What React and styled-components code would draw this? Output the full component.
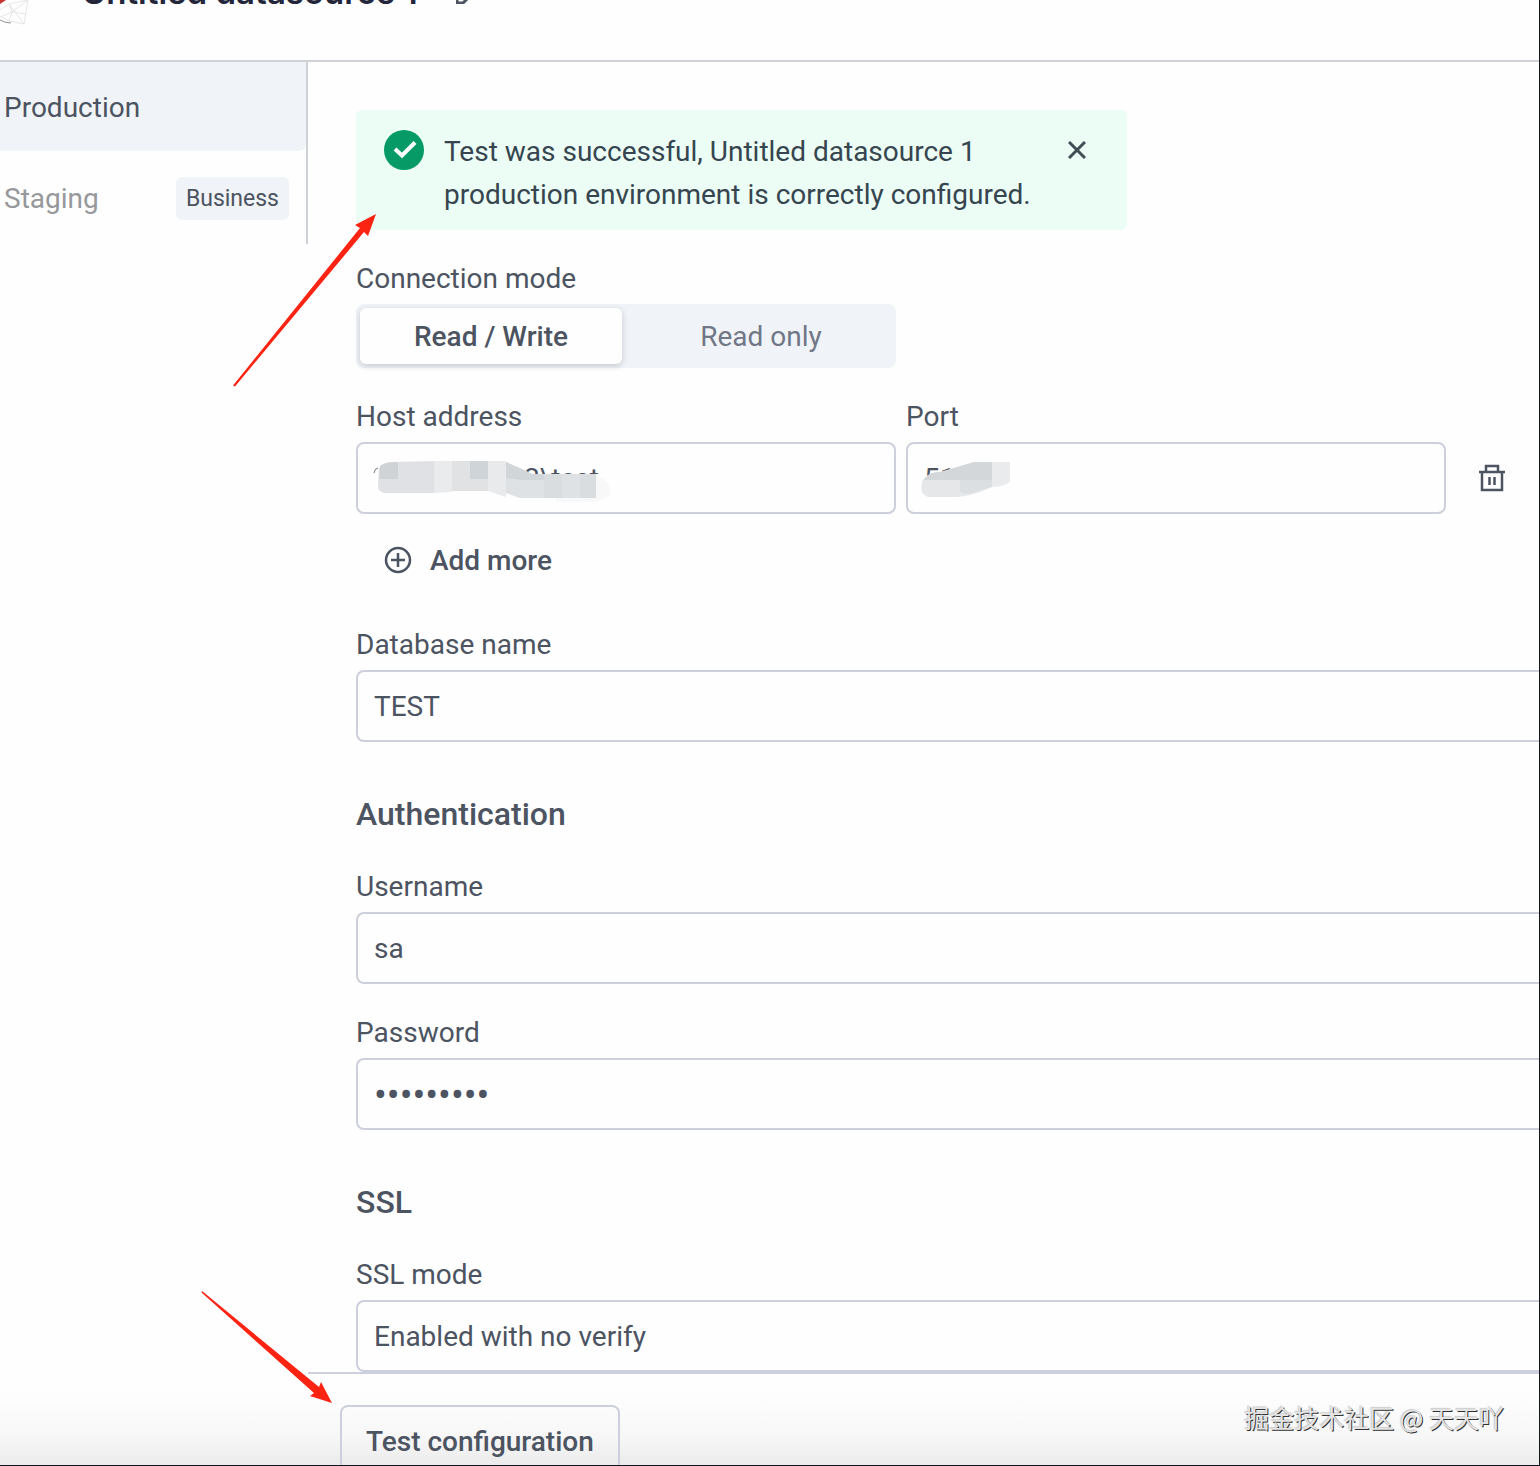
import React, { useState } from "react";
import styled, { createGlobalStyle } from "styled-components";

const GlobalStyle = createGlobalStyle`
  * {
    box-sizing: border-box;
  }

  body {
    margin: 0;
    overflow: hidden;
    font-family: Roboto, "Liberation Sans", sans-serif;
    font-size: 28px;
    color: #4c5361;
    background: #fefefe;
  }

  button,
  input,
  select {
    font: inherit;
    color: inherit;
  }
`;

const Shell = styled.div`
  position: relative;
  height: 100vh;
  overflow: hidden;
  border-right: 1px solid #15161a;
  border-bottom: 1px solid #15161a;
  background: linear-gradient(to top, #ebebeb 0, #f7f7f7 28px, #fefefe 74px);
`;

const Header = styled.header`
  display: flex;
  align-items: flex-start;
  height: 62px;
  overflow: hidden;
  border-bottom: 2px solid #d0d2d8;
`;

const Logo = styled.svg`
  flex: none;
  width: 32px;
  height: 28px;
  margin-right: 50px;
`;

const Title = styled.h1`
  margin: -26px 38px 0 0;
  font-family: Inter, sans-serif;
  font-size: 33px;
  line-height: 36px;
  font-weight: 600;
  color: #23263b;
`;

const EditButton = styled.button`
  margin: -20px 0 0;
  padding: 0;
  border: none;
  background: none;
  line-height: 0;
  cursor: pointer;
`;

const Body = styled.div`
  display: flex;
  align-items: flex-start;
`;

const Sidebar = styled.nav`
  flex: none;
  width: 308px;
  border-right: 2px solid #cdd0d7;
`;

const Environment = styled.a`
  display: flex;
  align-items: center;
  justify-content: space-between;
  height: 91px;
  padding: 2px 17px 0 4px;
  border-bottom: 2px solid transparent;
  border-radius: 0 0 8px 0;
  text-decoration: none;
  color: ${(props) => (props.$active ? "#4c5361" : "#96989c")};
  background: ${(props) => (props.$active ? "#f0f4f8" : "transparent")};
  background-clip: padding-box;
`;

const Badge = styled.span`
  padding: 0 10px;
  border-radius: 6px;
  font-size: 23px;
  line-height: 43px;
  color: #4c5361;
  background: #f0f4f8;
`;

const Main = styled.main`
  flex: 1;
  min-width: 0;
`;

const Form = styled.form`
  display: flex;
  flex-direction: column;
  padding: 48px 0 0 48px;
`;

const Alert = styled.div`
  display: flex;
  align-items: flex-start;
  gap: 20px;
  max-width: 771px;
  margin-bottom: 30px;
  padding: 20px 30px 14px 28px;
  border-radius: 6px;
  color: #36454f;
  background: #ebfdf5;

  svg {
    flex: none;
  }
`;

const AlertText = styled.p`
  flex: 1;
  margin: 0;
  line-height: 43px;
`;

const CloseButton = styled.button`
  display: grid;
  place-items: center;
  width: 40px;
  height: 40px;
  margin-left: -20px;
  padding: 0;
  border: none;
  background: none;
  cursor: pointer;
`;

const Field = styled.div`
  margin-bottom: 30px;
`;

const Label = styled.label`
  display: block;
  margin-bottom: 6px;
  line-height: 38px;
`;

const Segmented = styled.div`
  display: grid;
  grid-template-columns: 1fr 1fr;
  gap: 8px;
  max-width: 540px;
  height: 64px;
  padding: 4px;
  border-radius: 8px;
  background: #f0f4f8;
`;

const Segment = styled.button`
  border: none;
  border-radius: 6px;
  cursor: pointer;
  font-weight: ${(props) => (props.$active ? 500 : 400)};
  color: ${(props) => (props.$active ? "#4c5361" : "#717786")};
  background: ${(props) => (props.$active ? "#fefefe" : "transparent")};
  box-shadow: ${(props) =>
    props.$active ? "0 2px 6px rgba(40, 45, 60, 0.22)" : "none"};
`;

const HostRow = styled.div`
  display: grid;
  grid-template-columns: 1fr 1fr 83px;
  gap: 10px;
  align-items: end;
`;

const InputBox = styled.div`
  position: relative;
`;

const Input = styled.input`
  display: block;
  width: 100%;
  height: 72px;
  padding: 0 16px;
  border: 2px solid #cdd0dc;
  border-radius: 8px;
  outline: none;
  background: #fefefe;
`;

/* these run on past the right edge of the panel */
const WideInput = styled(Input)`
  border-right: none;
  border-radius: 8px 0 0 8px;
`;

const PasswordInput = styled(WideInput)`
  padding-top: 2px;
  font-size: 38px;
`;

const WideSelect = styled(WideInput)`
  appearance: none;
`;

const Mask = styled.svg`
  position: absolute;
  top: 0;
  left: 0;
  pointer-events: none;
`;

const DeleteButton = styled.button`
  display: grid;
  place-items: center;
  width: 72px;
  height: 72px;
  padding: 0;
  border: none;
  background: none;
  cursor: pointer;
`;

const AddButton = styled.button`
  display: flex;
  align-items: center;
  align-self: flex-start;
  gap: 18px;
  height: 72px;
  margin: 10px 0 30px;
  padding: 0 28px;
  border: none;
  font-weight: 500;
  background: none;
  cursor: pointer;
`;

const SectionTitle = styled.h2`
  margin: 23px 0 35px;
  font-size: 32px;
  line-height: 38px;
  font-weight: 500;
`;

const Footer = styled.footer`
  margin-top: -30px;
  padding: 31px 32px 0;
  border-top: 2px solid #cdd0dc;
`;

const TestButton = styled.button`
  height: 72px;
  padding: 0 24px;
  border: 2px solid #cdd0dc;
  border-radius: 8px;
  font-weight: 500;
  background: transparent;
  cursor: pointer;
`;

const Arrows = styled.svg`
  position: absolute;
  top: 0;
  left: 0;
  pointer-events: none;
`;

const Watermark = styled.div`
  position: absolute;
  right: 35px;
  bottom: 30px;
  font-family: "Noto Sans CJK SC", sans-serif;
  font-size: 25px;
  line-height: 36px;
  color: #e4e4e4;
  text-shadow: 1px 1px 0 #333, -1px -1px 1px #ccc;
`;

const HostMask = () => (
  <Mask width="260" height="72" viewBox="0 0 260 72">
    <path d="M22 32h226v28H22z" fill="#fefefe" />
    <path d="M22 20h128v20H22z" fill="#fefefe" />
    <path d="M18 31q1-5 4-5" fill="none" stroke="#777" />
    <path d="M23 27q3-7 13-7l42-1v32H30q-8 0-8-7z" fill="#dfe1e4" />
    <path d="M24 24q5-4 18-4v17H23z" fill="#d0d3d6" />
    <path d="M78 19h18v31l-18 1z" fill="#eaebed" />
    <path d="M96 19h18v30H96z" fill="#e0e2e4" />
    <path d="M114 19h18v18h-18z" fill="#cfd4d8" />
    <path d="M114 37h18v12h-18z" fill="#e0e2e4" />
    <path d="M132 19h18v36l-18-6z" fill="#e9eaec" />
    <path d="M150 20l16 7 10 5h64v24h-76l-14-5z" fill="#dfe2e4" />
    <path d="M150 20l18 8 8 4h14v6h-24l-16-2z" fill="#d1d6d9" />
    <path d="M188 32h18v24h-18zM224 32h16v24h-16z" fill="#dadde0" />
    <path d="M240 34q16 4 14 20l-14 6h-40v-4h40z" fill="#f8f8f8" />
  </Mask>
);

const PortMask = () => (
  <Mask width="120" height="72" viewBox="0 0 120 72">
    <path d="M16 35l22-6 30-8h36v38H16z" fill="#fefefe" />
    <path d="M20 35q4-5 14-5l34-10h18v19H16z" fill="#d3d7d9" />
    <path d="M17 38h69v7q-17 8-34 10H22q-10-4-5-17z" fill="#e5e7e9" />
    <path d="M54 38h32v7l-25 7-7-2z" fill="#dcdfe1" />
    <path d="M86 20h18v20q-8 5-18 5z" fill="#e9ebed" />
  </Mask>
);

const App = () => {
  const [mode, setMode] = useState("write");
  const [showAlert, setShowAlert] = useState(true);

  return (
    <>
      <GlobalStyle />
      <Shell>
        <Header>
          <Logo viewBox="0 0 32 28">
            <path d="M0 0h6L0 4z" fill="#c8342f" />
            <path
              d="M0 10L9 4l19-4-4 24-15-3L0 16M9 4l15 20M9 4l3 8-12 5M12 12L28 0M12 12l-3 9M12 12l14 2"
              fill="none"
              stroke="#e6e6e8"
            />
            <path d="M0 20q5 3 11 3" fill="none" stroke="#8d9293" />
          </Logo>
          <Title>Untitled datasource 1</Title>
          <EditButton aria-label="Rename">
            <svg width="24" height="24" viewBox="0 0 24 24">
              <path
                d="M1 23v-6L17 1l6 6L7 23z"
                fill="none"
                stroke="#4c5361"
                strokeWidth="3"
              />
            </svg>
          </EditButton>
        </Header>
        <Body>
          <Sidebar>
            <Environment href="#production" $active>
              Production
            </Environment>
            <Environment href="#staging">
              Staging
              <Badge>Business</Badge>
            </Environment>
          </Sidebar>
          <Main>
            <Form onSubmit={(e) => e.preventDefault()}>
              {showAlert && (
                <Alert role="status">
                  <svg width="40" height="40" viewBox="0 0 40 40">
                    <circle cx="20" cy="20" r="20" fill="#069b66" />
                    <path
                      d="M11 19l7 6.500L31 12.500"
                      fill="none"
                      stroke="#fff"
                      strokeWidth="4"
                    />
                  </svg>
                  <AlertText>
                    Test was successful, Untitled datasource 1 production
                    environment is correctly configured.
                  </AlertText>
                  <CloseButton
                    type="button"
                    aria-label="Close"
                    onClick={() => setShowAlert(false)}
                  >
                    <svg width="18" height="18" viewBox="0 0 18 18">
                      <path
                        d="M1 1l16 16M17 1L1 17"
                        stroke="#3f4d54"
                        strokeWidth="3"
                      />
                    </svg>
                  </CloseButton>
                </Alert>
              )}
              <Field>
                <Label as="div" id="mode-label">
                  Connection mode
                </Label>
                <Segmented role="group" aria-labelledby="mode-label">
                  <Segment
                    type="button"
                    $active={mode === "write"}
                    aria-pressed={mode === "write"}
                    onClick={() => setMode("write")}
                  >
                    Read / Write
                  </Segment>
                  <Segment
                    type="button"
                    $active={mode === "read"}
                    aria-pressed={mode === "read"}
                    onClick={() => setMode("read")}
                  >
                    Read only
                  </Segment>
                </Segmented>
              </Field>
              <HostRow>
                <div>
                  <Label htmlFor="host">Host address</Label>
                  <InputBox>
                    <Input
                      id="host"
                      defaultValue={"\u2003\u2003\u2003\u2003\u2003\u20052\\test"}
                    />
                    <HostMask />
                  </InputBox>
                </div>
                <div>
                  <Label htmlFor="port">Port</Label>
                  <InputBox>
                    <Input id="port" defaultValue="51" />
                    <PortMask />
                  </InputBox>
                </div>
                <DeleteButton type="button" aria-label="Delete">
                  <svg width="28" height="28" viewBox="0 0 28 28">
                    <path
                      d="M1 8h26M8 8V2h12v6M4 8v18h20V8"
                      fill="none"
                      stroke="#4c5361"
                      strokeWidth="2.500"
                    />
                    <path
                      d="M11.500 13v8M16.500 13v8"
                      stroke="#4c5361"
                      strokeWidth="2.500"
                    />
                  </svg>
                </DeleteButton>
              </HostRow>
              <AddButton type="button">
                <svg width="28" height="28" viewBox="0 0 28 28">
                  <circle
                    cx="14"
                    cy="14"
                    r="12"
                    fill="none"
                    stroke="#4c5361"
                    strokeWidth="2.500"
                  />
                  <path
                    d="M14 7v14M7 14h14"
                    stroke="#4c5361"
                    strokeWidth="2.500"
                  />
                </svg>
                Add more
              </AddButton>
              <Field>
                <Label htmlFor="database">Database name</Label>
                <WideInput id="database" defaultValue="TEST" />
              </Field>
              <SectionTitle>Authentication</SectionTitle>
              <Field>
                <Label htmlFor="username">Username</Label>
                <WideInput id="username" defaultValue="sa" />
              </Field>
              <Field>
                <Label htmlFor="password">Password</Label>
                <PasswordInput
                  id="password"
                  type="password"
                  defaultValue="123456789"
                />
              </Field>
              <SectionTitle>SSL</SectionTitle>
              <Field>
                <Label htmlFor="ssl">SSL mode</Label>
                <WideSelect as="select" id="ssl">
                  <option>Enabled with no verify</option>
                </WideSelect>
              </Field>
            </Form>
            <Footer>
              <TestButton type="button">Test configuration</TestButton>
            </Footer>
          </Main>
        </Body>
        <Arrows width="400" height="1440" viewBox="0 0 400 1440">
          <path
            d="M233 385.500L360 228l-5-3 21-11-8 22-4-4L235 386.500z"
            fill="#fb2413"
          />
          <path
            d="M202 1291l117 96 2-5 11 21-22-7 4-3L201.500 1292.500z"
            fill="#fb2413"
          />
        </Arrows>
        <Watermark>掘金技术社区 @ 天天吖</Watermark>
      </Shell>
    </>
  );
};

export default App;
